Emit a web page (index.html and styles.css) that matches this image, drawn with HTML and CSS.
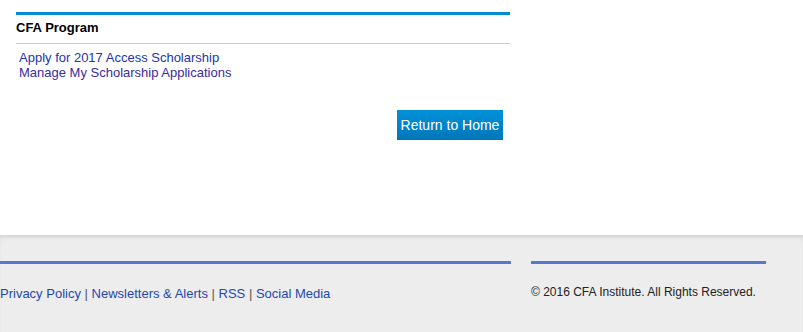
FILE: index.html
```html
<!DOCTYPE html>
<html lang="en">
<head>
    <meta charset="UTF-8">
    <title>CFA Program - Scholarships</title>
    <link rel="stylesheet" href="styles.css">
</head>
<body>
    <div class="page">
        <div class="panel">
            <h2 class="panel-title">CFA Program</h2>
            <ul class="panel-links">
                <li><a href="#" class="link">Apply for 2017 Access Scholarship</a></li>
                <li><a href="#" class="link visited">Manage My Scholarship Applications</a></li>
            </ul>
            <div class="actions">
                <a href="#" class="home-button">Return to Home</a>
            </div>
        </div>
    </div>

    <div class="footer">
        <div class="footer-left">
            <a href="#">Privacy Policy</a> <span class="sep">|</span>
            <a href="#">Newsletters &amp; Alerts</a> <span class="sep">|</span>
            <a href="#">RSS</a> <span class="sep">|</span>
            <a href="#">Social Media</a>
        </div>
        <div class="footer-right">
            &copy; 2016 CFA Institute. All Rights Reserved.
        </div>
    </div>
</body>
</html>
```

FILE: styles.css
```css
/* Reset */
* {
    margin: 0;
    padding: 0;
    box-sizing: border-box;
}

html, body {
    height: 100%;
}

body {
    font-family: 'Liberation Sans', Arial, sans-serif;
    background-color: #ededed;
    color: #000;
    display: flex;
    flex-direction: column;
}

.page {
    background-color: #fff;
    height: 235px;
    padding: 12px 0 0 16px;
}

.panel {
    width: 494px;
    border-top: 3px solid #008bd2;
}

.panel-title {
    font-size: 13px;
    font-weight: bold;
    line-height: 16px;
    padding: 5px 0 7px;
    border-bottom: 1px solid #cccccc;
}

.panel-links {
    list-style: none;
    padding: 6px 0 0 3px;
}

.panel-links li {
    font-size: 13px;
    line-height: 15px;
}

.link {
    color: #2236a8;
    text-decoration: none;
}

.link.visited {
    color: #3a2c9e;
}

.actions {
    display: flex;
    justify-content: flex-end;
    padding: 30px 7px 0 0;
}

.home-button {
    display: block;
    width: 106px;
    height: 30px;
    line-height: 30px;
    text-align: center;
    font-size: 14px;
    color: #fff;
    text-decoration: none;
    background: linear-gradient(to bottom, #0092d8, #0076b8);
}

/* Footer */
.footer {
    flex: 1;
    display: flex;
    align-items: flex-start;
    background-color: #ededed;
    box-shadow: inset 0 4px 4px -2px rgba(0, 0, 0, 0.12);
    padding-top: 26px;
}

.footer-left {
    width: 511px;
    border-top: 3px solid #5b77c9;
    padding-top: 22px;
    font-size: 13px;
    line-height: 16px;
    white-space: nowrap;
}

.footer-left a {
    color: #1f48ae;
    text-decoration: none;
}

.footer-left .sep {
    color: #5a5a5a;
}

.footer-right {
    width: 235px;
    margin-left: 20px;
    border-top: 3px solid #5b77c9;
    padding-top: 21px;
    font-size: 12px;
    line-height: 14px;
    color: #222;
}
```
